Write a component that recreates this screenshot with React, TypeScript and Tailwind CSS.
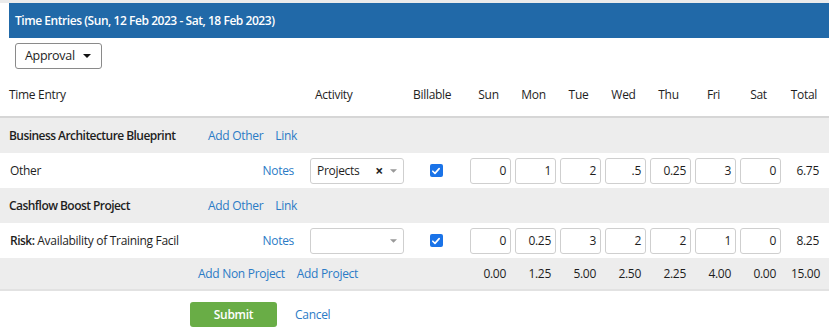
import React from "react";

const DAYS = ["Sun", "Mon", "Tue", "Wed", "Thu", "Fri", "Sat"];

const GRID = "grid grid-cols-[306px_100px_60px_repeat(7,45px)_48px]";

type Entry = {
  project: string;
  label: React.ReactNode;
  activity: string;
  hours: string[];
  total: string;
};

const entries: Entry[] = [
  {
    project: "Business Architecture Blueprint",
    label: "Other",
    activity: "Projects",
    hours: ["0", "1", "2", ".5", "0.25", "3", "0"],
    total: "6.75",
  },
  {
    project: "Cashflow Boost Project",
    label: (
      <>
        <span className="font-semibold tracking-[-0.5px]">Risk:</span> Availability of Training Facil
      </>
    ),
    activity: "",
    hours: ["0", "0.25", "3", "2", "2", "1", "0"],
    total: "8.25",
  },
];

const dayTotals = ["0.00", "1.25", "5.00", "2.50", "2.25", "4.00", "0.00"];

function Check() {
  return (
    <span className="flex h-[13px] w-[13px] items-center justify-center rounded-[2px] bg-[#1a73e8]">
      <svg viewBox="0 0 12 12" className="h-[10px] w-[10px]">
        <path d="M2.2 6.3 4.8 8.8 9.8 3.2" fill="none" stroke="white" strokeWidth="2" strokeLinecap="round" strokeLinejoin="round" />
      </svg>
    </span>
  );
}

function Caret({ className }: { className: string }) {
  return (
    <svg viewBox="0 0 8 4" className={className}>
      <path d="M0 0h8L4 4z" fill="currentColor" />
    </svg>
  );
}

function ProjectRow({ name }: { name: string }) {
  return (
    <div className="flex h-[35px] items-center bg-[#ededed]">
      <span className="w-[208px] pl-[9px] font-semibold tracking-[-0.55px]">{name}</span>
      <a className="text-[#2b7bc6]">Add Other</a>
      <a className="ml-[12px] text-[#2b7bc6]">Link</a>
    </div>
  );
}

function EntryRow({ e }: { e: Entry }) {
  return (
    <div className={`${GRID} h-[35px] items-center bg-white`}>
      <div className="flex items-center justify-between pl-[10px] pr-[12px]">
        <span>{e.label}</span>
        <a className="text-[#2b7bc6]">Notes</a>
      </div>
      <div className="pl-[4px]">
        <div className="flex h-[26px] w-[94px] items-center rounded-[3px] border border-[#cfcfcf] pl-[6px] pr-[6px]">
          <span className="flex-1">{e.activity}</span>
          {e.activity && <span className="mr-[7px] text-[14px] font-bold leading-none">×</span>}
          <Caret className="h-[4px] w-[7px] text-[#999]" />
        </div>
      </div>
      <div className="flex justify-center">
        <Check />
      </div>
      {e.hours.map((h, i) => (
        <div key={DAYS[i]} className="pl-[4px]">
          <div className="flex h-[26px] w-[41px] items-center justify-end rounded-[3px] border border-[#cfcfcf] pr-[4px]">
            {h}
          </div>
        </div>
      ))}
      <div className="pr-[10px] text-right">{e.total}</div>
    </div>
  );
}

export default function App() {
  return (
    <div className="h-[334px] w-[829px] overflow-hidden bg-white font-['Segoe_UI','Open_Sans',sans-serif] text-[12px] tracking-[-0.3px] text-[#1e1e1e]">
      <div className="h-[3px] bg-[#ebebeb]" />
      <div className="ml-[9px]">
        <div className="flex h-[35px] items-center pl-[6px] font-semibold tracking-[-0.45px] text-white bg-[#2169a8]">
          Time Entries (Sun, 12 Feb 2023 - Sat, 18 Feb 2023)
        </div>
        <div className="h-[36px] pl-[6px] pt-[5px]">
          <button className="flex h-[26px] w-[87px] items-center rounded-[3px] border border-[#8a8a8a] pl-[9px] pr-[10px] text-[12.5px]">
            <span className="flex-1 text-left">Approval</span>
            <Caret className="h-[4px] w-[8px] text-[#111]" />
          </button>
        </div>
      </div>

      {/* header */}
      <div className={`${GRID} h-[44px] items-center border-b-2 border-[#d6d6d6]`}>
        <div className="pl-[9px]">Time Entry</div>
        <div className="pl-[9px]">Activity</div>
        <div className="pl-[7px]">Billable</div>
        {DAYS.map((d) => (
          <div key={d} className="text-center">
            {d}
          </div>
        ))}
        <div className="pr-[12px] text-right">Total</div>
      </div>

      {entries.map((e) => (
        <React.Fragment key={e.project}>
          <ProjectRow name={e.project} />
          <EntryRow e={e} />
        </React.Fragment>
      ))}

      {/* totals */}
      <div className={`${GRID} h-[33px] items-center border-b-2 border-[#e2e2e2] bg-[#ededed]`}>
        <div className="col-span-3 flex pl-[198px]">
          <a className="text-[#2b7bc6]">Add Non Project</a>
          <a className="ml-[12px] text-[#2b7bc6]">Add Project</a>
        </div>
        {dayTotals.map((t, i) => (
          <div key={DAYS[i]} className="pr-[5px] text-right">
            {t}
          </div>
        ))}
        <div className="pr-[9px] text-right">15.00</div>
      </div>

      <div className="flex items-center pl-[190px] pt-[11px]">
        <button className="h-[25px] w-[87px] rounded-[3px] bg-[#69ad46] font-semibold text-white">Submit</button>
        <a className="ml-[18px] text-[#2b7bc6]">Cancel</a>
      </div>
    </div>
  );
}
